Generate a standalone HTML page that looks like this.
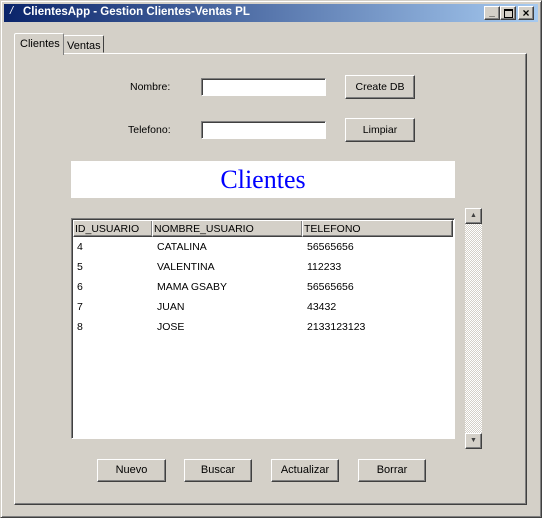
<!DOCTYPE html><html><head><style>
body{margin:0;width:542px;height:518px;background:#d4d0c8;font-family:"Liberation Sans",Tahoma,sans-serif;font-size:10.5px;position:relative;overflow:hidden}
.a{position:absolute;white-space:nowrap}
.btn{position:absolute;background:#d4d0c8;border:1px solid;border-color:#fff #404040 #404040 #fff;box-shadow:inset -1px -1px #808080;text-align:center;box-sizing:border-box;color:#000;white-space:nowrap;overflow:hidden}
.ent{position:absolute;background:#fff;border:1px solid;border-color:#808080 #fff #fff #808080;box-shadow:inset 1px 1px #404040;box-sizing:border-box}
.row{position:absolute;left:77px;height:20px;width:370px}
.row span{position:absolute;top:0;white-space:nowrap}
</style></head><body>
<div class="a" style="left:0;top:0;width:540px;height:516px;border:1px solid;border-color:#d4d0c8 #404040 #404040 #d4d0c8;box-shadow:inset 1px 1px #fff,inset -1px -1px #808080"></div>
<div class="a" style="left:4px;top:4px;width:534px;height:18px;background:linear-gradient(90deg,#0a246a,#a6caf0)"></div>
<div class="a" style="left:10px;top:5px;color:#fff;font-style:italic;font-size:11px">/</div>
<div class="a" style="left:23px;top:6px;color:#fff;font-weight:bold;font-size:11.5px">ClientesApp - Gestion Clientes-Ventas PL</div>
<div class="btn" style="left:484px;top:6px;width:16px;height:14px;font-size:10px;line-height:12px;font-weight:bold">_</div>
<div class="btn" style="left:500px;top:6px;width:16px;height:14px"><div class="a" style="left:3px;top:2px;width:7px;height:6px;border:1px solid #000;border-top-width:2px"></div></div>
<div class="btn" style="left:518px;top:6px;width:16px;height:14px;font-size:12px;line-height:12px;font-weight:bold">×</div>
<div class="a" style="left:14px;top:53px;width:511px;height:450px;border:1px solid;border-color:#fff #404040 #404040 #fff;box-shadow:inset -1px -1px #808080"></div>
<div class="a" style="left:63px;top:35px;width:41px;height:18px;border:1px solid;border-color:#fff #404040 transparent #fff;border-radius:2px 2px 0 0;box-sizing:border-box;padding:4px 0 0 3px;font-size:11px;overflow:hidden">Ventas</div>
<div class="a" style="left:14px;top:33px;width:50px;height:22px;border:1px solid;border-color:#fff #808080 transparent #fff;border-bottom:none;border-radius:2px 2px 0 0;background:#d4d0c8;box-sizing:border-box;padding:4px 0 0 5px;font-size:11px;overflow:hidden">Clientes</div>
<div class="a" style="left:130px;top:81px">Nombre:</div>
<div class="ent" style="left:201px;top:78px;width:125px;height:18px"></div>
<div class="btn" style="left:345px;top:75px;width:70px;height:24px;line-height:22px">Create DB</div>
<div class="a" style="left:128px;top:124px">Telefono:</div>
<div class="ent" style="left:201px;top:121px;width:125px;height:18px"></div>
<div class="btn" style="left:345px;top:118px;width:70px;height:24px;line-height:22px">Limpiar</div>
<div class="a" style="left:71px;top:161px;width:384px;height:37px;background:#fff;color:#0000ff;font-family:'Liberation Serif',serif;font-size:26px;text-align:center;line-height:37px">Clientes</div>
<div class="a" style="left:71px;top:218px;width:384px;height:221px;background:#fff;border:1px solid;border-color:#808080 #fff #fff #808080;box-shadow:inset 1px 1px #404040;box-sizing:border-box"></div>
<div class="btn" style="left:73px;top:220px;width:80px;height:17px;text-align:left;line-height:16px;padding-left:1px">ID_USUARIO</div>
<div class="btn" style="left:152px;top:220px;width:151px;height:17px;text-align:left;line-height:16px;padding-left:1px">NOMBRE_USUARIO</div>
<div class="btn" style="left:302px;top:220px;width:151px;height:17px;text-align:left;line-height:16px;padding-left:1px">TELEFONO</div>
<div class="row" style="top:241px"><span style="left:0">4</span><span style="left:80px">CATALINA</span><span style="left:230px">56565656</span></div>
<div class="row" style="top:261px"><span style="left:0">5</span><span style="left:80px">VALENTINA</span><span style="left:230px">112233</span></div>
<div class="row" style="top:281px"><span style="left:0">6</span><span style="left:80px">MAMA GSABY</span><span style="left:230px">56565656</span></div>
<div class="row" style="top:301px"><span style="left:0">7</span><span style="left:80px">JUAN</span><span style="left:230px">43432</span></div>
<div class="row" style="top:321px"><span style="left:0">8</span><span style="left:80px">JOSE</span><span style="left:230px">2133123123</span></div>
<div class="a" style="left:465px;top:208px;width:17px;height:241px;background:repeating-conic-gradient(#fff 0 25%,#d4d0c8 0 50%) 0 0/2px 2px"></div>
<div class="btn" style="left:465px;top:208px;width:17px;height:16px;font-size:7px;line-height:14px;color:#404040">▲</div>
<div class="btn" style="left:465px;top:433px;width:17px;height:16px;font-size:7px;line-height:14px;color:#404040">▼</div>
<div class="btn" style="left:97px;top:459px;width:69px;height:23px;line-height:21px;font-size:11px">Nuevo</div>
<div class="btn" style="left:184px;top:459px;width:68px;height:23px;line-height:21px;font-size:11px">Buscar</div>
<div class="btn" style="left:271px;top:459px;width:68px;height:23px;line-height:21px;font-size:11px">Actualizar</div>
<div class="btn" style="left:358px;top:459px;width:68px;height:23px;line-height:21px;font-size:11px">Borrar</div>
</body></html>
